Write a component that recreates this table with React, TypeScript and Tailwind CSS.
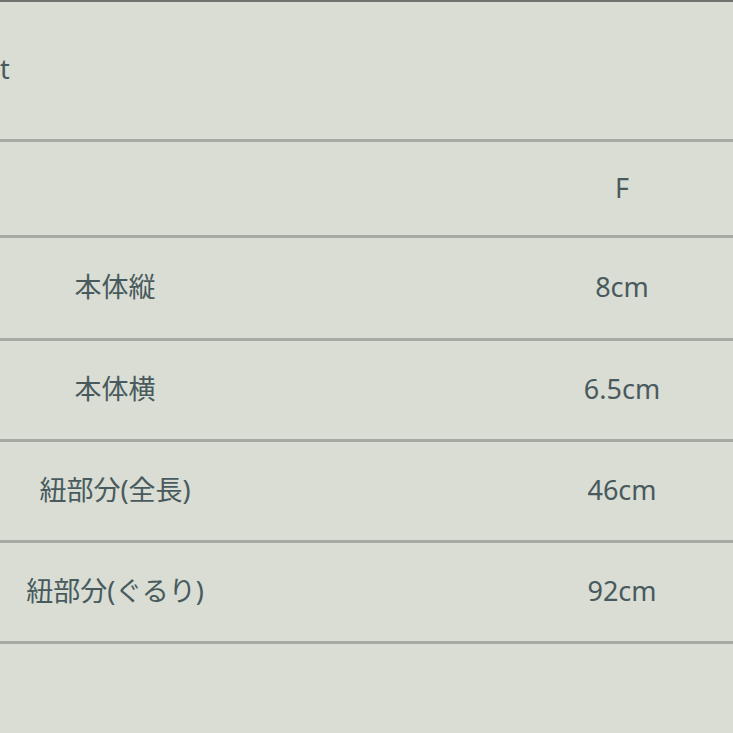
import React from "react";

const rows = [
  { label: "本体縦", value: "8cm", h: "h-[103px]" },
  { label: "本体横", value: "6.5cm", h: "h-[101px]" },
  { label: "紐部分(全長)", value: "46cm", h: "h-[101px]" },
  { label: "紐部分(ぐるり)", value: "92cm", h: "h-[101px]" },
];

const App = () => {
  return (
    <div
      className="w-[733px] h-[733px] overflow-hidden bg-[#d9ddd3] text-[#485a5d] text-[27px] border-t-2 border-[#707471]"
      style={{ fontFamily: '"Noto Sans", "Noto Sans CJK JP", sans-serif' }}
    >
      <div className="h-[140px] flex items-center border-b-[3px] border-[#a4a9a2]">
        <span className="pl-0 -mt-[2px]">t</span>
      </div>
      <div className="h-[96px] grid grid-cols-[230px_1fr_222px] items-center border-b-[3px] border-[#a4a9a2]">
        <span />
        <span />
        <span className="text-center">F</span>
      </div>
      {rows.map((r) => (
        <div
          key={r.label}
          className={r.h + " grid grid-cols-[230px_1fr_222px] items-center border-b-[3px] border-[#a4a9a2]"}
        >
          <span className="text-center -mt-[2px]">{r.label}</span>
          <span />
          <span className="text-center -mt-[2px]">{r.value}</span>
        </div>
      ))}
    </div>
  );
};

export default App;
